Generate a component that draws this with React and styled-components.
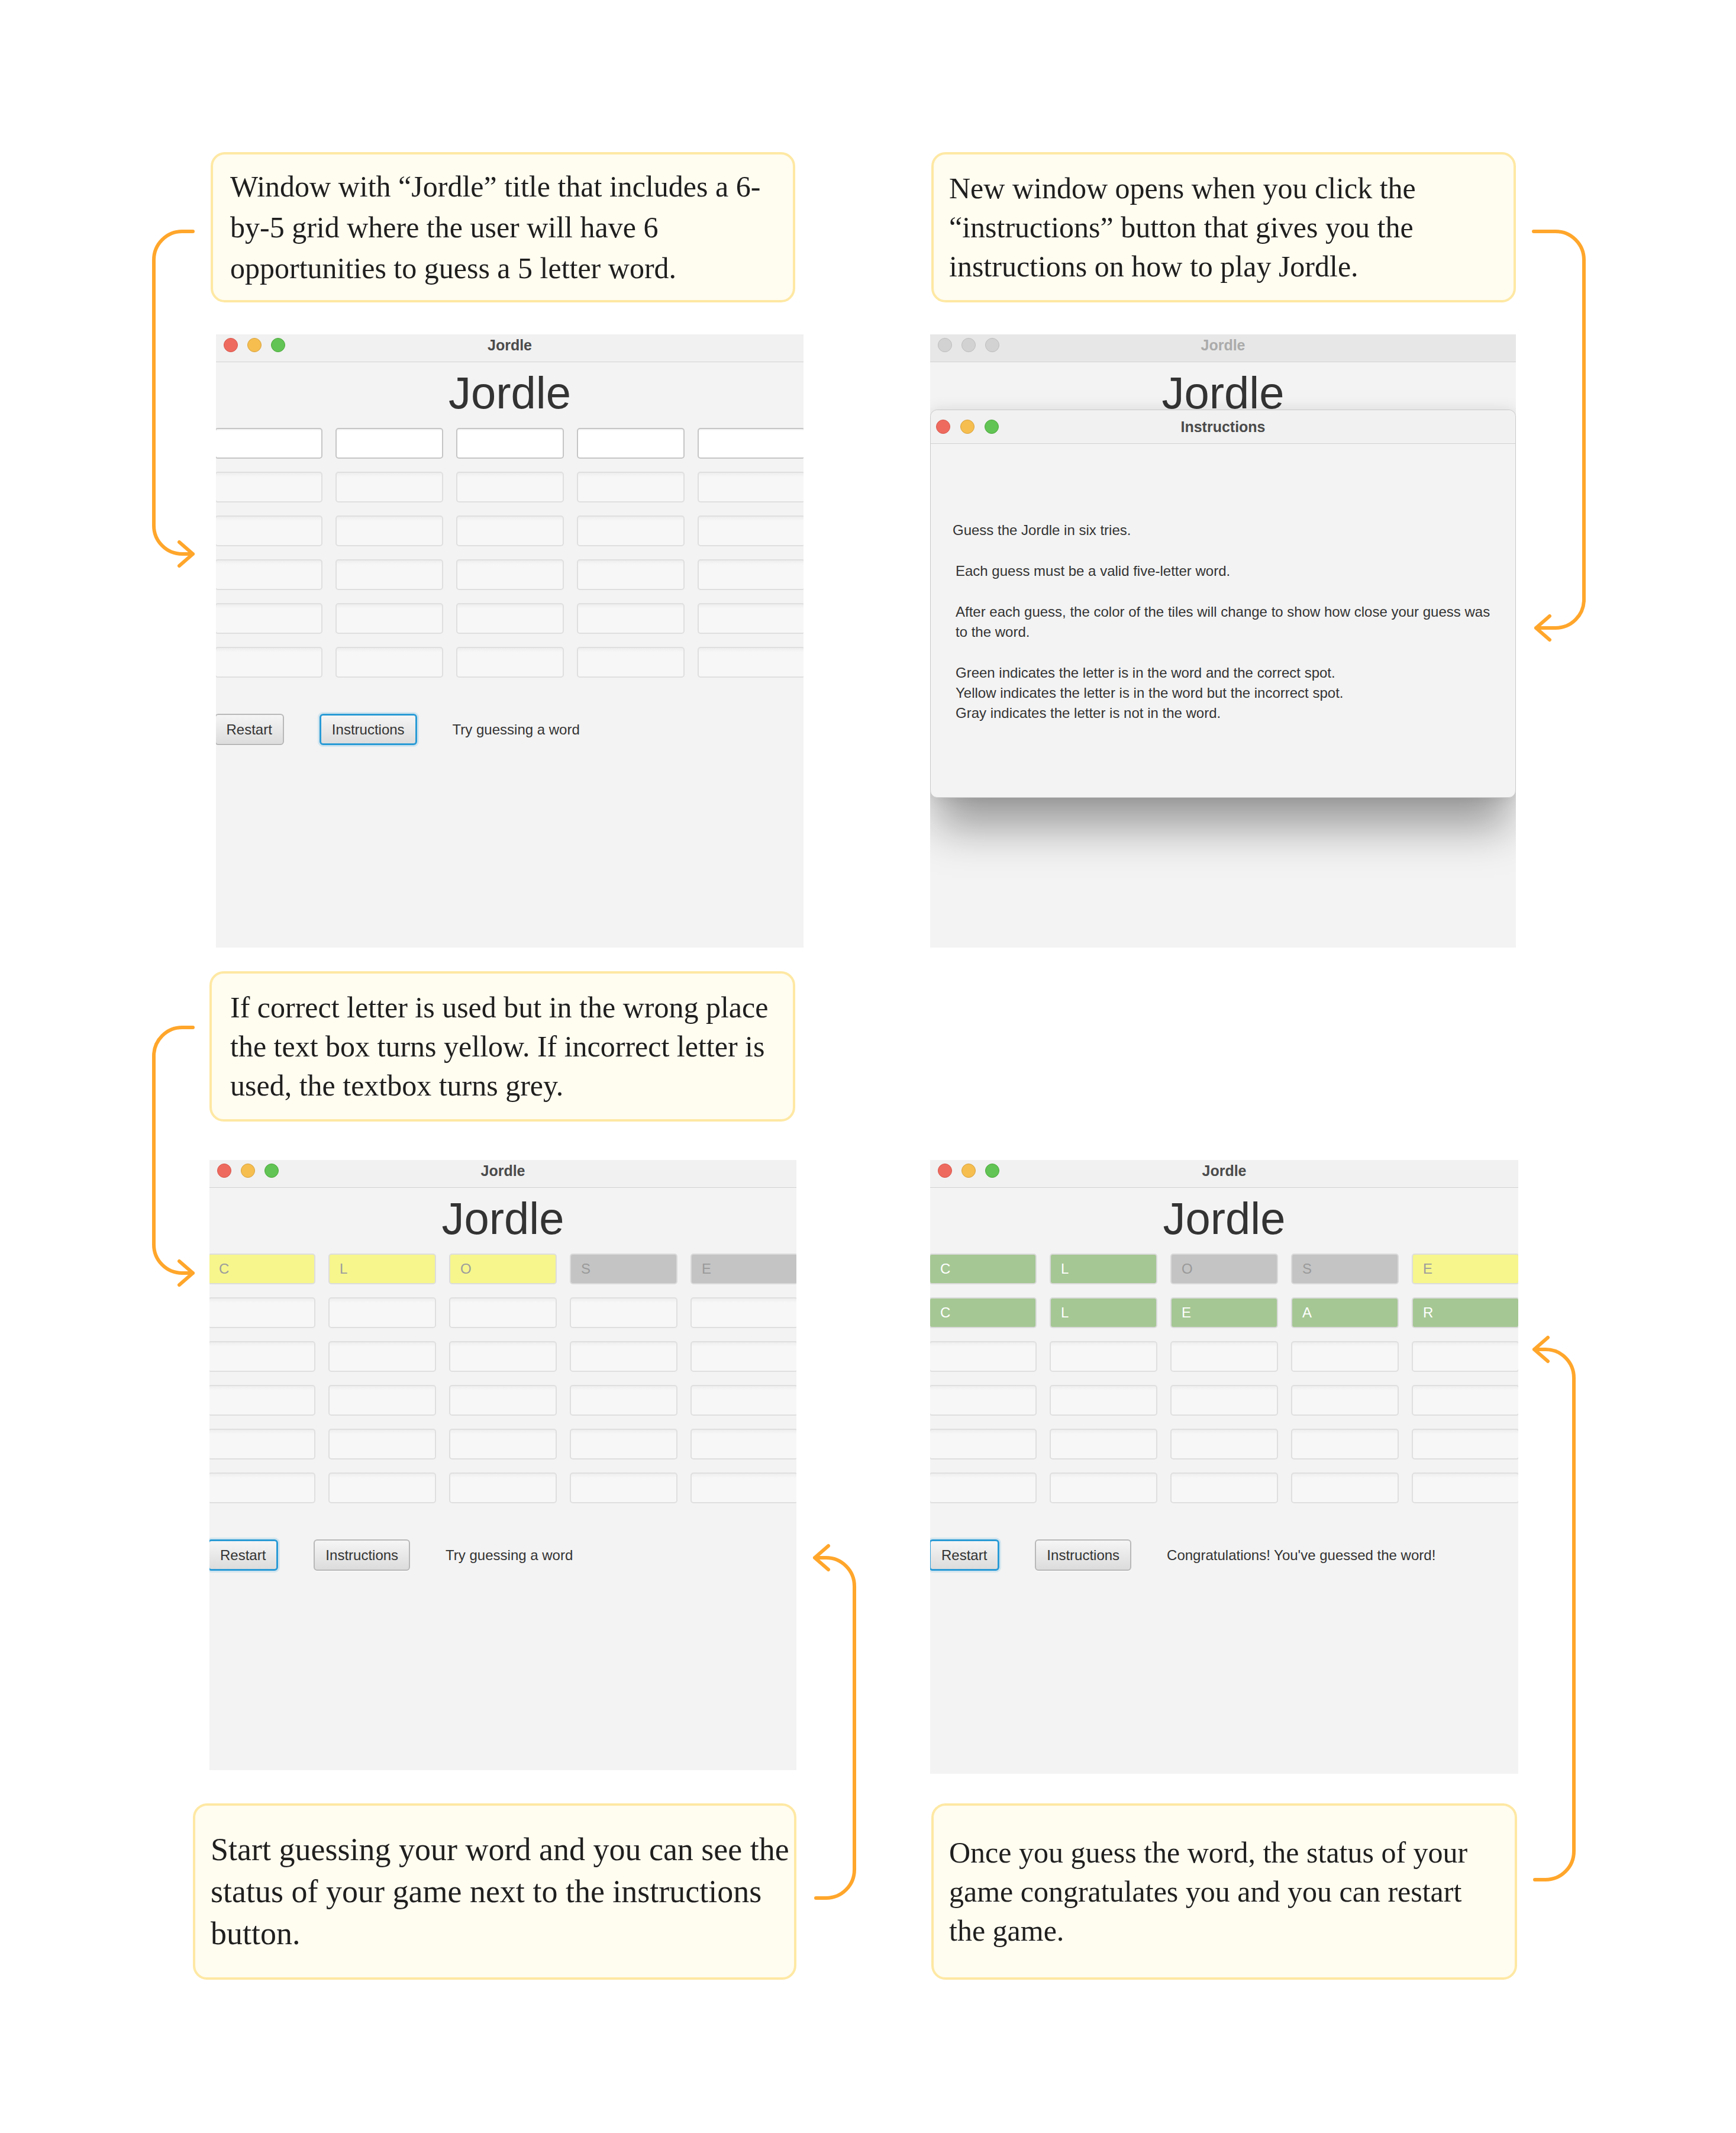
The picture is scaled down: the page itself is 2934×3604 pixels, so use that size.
import React from 'react';
import styled, { createGlobalStyle } from 'styled-components';

const GlobalStyle = createGlobalStyle`
  html, body { margin: 0; padding: 0; background: #ffffff; }
  * { box-sizing: border-box; }
`;

const Page = styled.div`
    width: 2934px;
    height: 3604px;
    padding-top: 257px;
    display: grid;
    grid-template-columns: 326px 1032px 214px 994px 368px;
    grid-template-rows: 254px 1090px 294px 1102px 348px;
    background: #ffffff;
`;

// yellow note box
const Callout = styled.div`
    grid-column: ${p => p.$col};
    grid-row: ${p => p.$row};
    align-self: end;
    margin-left: ${p => p.$ml}px;
    width: ${p => p.$w}px;
    height: ${p => p.$h}px;
    border: 4px solid #fee8a3;
    border-radius: 24px;
    background: #fffcf0;
    display: flex;
    align-items: center;
    padding-left: ${p => p.$pl}px;
    font-family: "Liberation Serif", "Times New Roman", serif;
    font-size: ${p => p.$size || 50}px;
    line-height: ${p => p.$lh}px;
    color: #1f1f1f;
    white-space: nowrap;
`;

const ArrowSvg = styled.svg`
    grid-column: ${p => p.$col};
    grid-row: ${p => p.$row};
    align-self: start;
    justify-self: start;
    margin-left: ${p => p.$ml}px;
    margin-top: ${p => p.$mt}px;
    overflow: visible;
`;

const Window = styled.div`
    grid-column: ${p => p.$col};
    grid-row: ${p => p.$row};
    align-self: ${p => p.$align || 'end'};
    margin-left: ${p => p.$ml || 0}px;
    margin-top: ${p => p.$mt || 0}px;
    width: ${p => p.$w}px;
    height: ${p => p.$h}px;
    position: relative;
    overflow: hidden;
    display: flex;
    flex-direction: column;
    background: #f3f3f3;
    font-family: "Liberation Sans", Arial, sans-serif;
`;

const TitleBar = styled.div`
    height: ${p => p.$height || 47}px;
    flex-shrink: 0;
    display: grid;
    grid-template-columns: 1fr auto 1fr;
    align-items: ${p => p.$center ? 'center' : 'start'};
    padding-top: ${p => p.$center ? 0 : 6}px;
    background: ${p => p.$inactive ? '#e7e7e7' : '#f1f1f1'};
    border-bottom: 1px solid #d2d2d2;
    border-radius: ${p => p.$round ? '12px 12px 0 0' : '0'};
`;

const Lights = styled.div`
    display: flex;
    gap: ${p => p.$gap || 16}px;
    padding-left: ${p => p.$pl || 13}px;
`;

const lightColors = {
    red: ['#ee6a5f', '#d8574b'],
    yellow: ['#f5be4f', '#d9a23f'],
    green: ['#61c454', '#4da83d'],
    off: ['#d2d2d2', '#bdbdbd'],
};

const Light = styled.span`
    width: 24px;
    height: 24px;
    border-radius: 50%;
    background: ${p => lightColors[p.$c][0]};
    border: 1px solid ${p => lightColors[p.$c][1]};
`;

const WindowTitle = styled.div`
    font-size: 25px;
    line-height: 24px;
    font-weight: bold;
    color: ${p => p.$inactive ? '#ababab' : '#4b4b4b'};
`;

const Body = styled.div`
    flex: 1;
    display: flex;
    flex-direction: column;
    align-items: center;
    overflow: hidden;
`;

const Content = styled.div`
    width: 998px;
    flex-shrink: 0;
`;

const Heading = styled.div`
    margin-top: 13px;
    font-size: 76px;
    line-height: 78px;
    text-align: center;
    color: #333333;
`;

const Board = styled.div`
    margin-top: 20px;
    display: grid;
    grid-template-columns: repeat(5, 182px);
    grid-auto-rows: 52px;
    gap: 22px;
`;

const tileStyles = {
    active: { bg: '#ffffff', border: '#c5c5c5', color: '#999999' },
    empty: { bg: 'linear-gradient(#eeeeee, #f7f7f7 7px)', border: '#dfdfdf', color: '#999999' },
    yellow: { bg: '#f6f68d', border: '#dddddd', color: '#9c9c9c' },
    gray: { bg: '#c4c4c4', border: '#dadada', color: '#9a9a9a' },
    green: { bg: '#a5c794', border: '#dadada', color: '#ffffff' },
};

const Tile = styled.div`
    border: 2px solid ${p => tileStyles[p.$kind].border};
    border-radius: 5px;
    background: ${p => tileStyles[p.$kind].bg};
    color: ${p => tileStyles[p.$kind].color};
    display: flex;
    align-items: center;
    padding-left: 17px;
    font-size: 24px;
    box-shadow: ${p => p.$kind === 'active' ? 'inset 0 3px 3px -2px rgba(0,0,0,0.08)' : 'none'};
`;

const Controls = styled.div`
    margin-top: 61px;
    display: flex;
    align-items: center;
    gap: 60px;
`;

const Button = styled.div`
    height: 53px;
    padding: 0 18px;
    display: flex;
    align-items: center;
    font-size: 24px;
    color: #333333;
    border-radius: 6px;
    background: linear-gradient(#f5f5f5, #dcdcdc);
    border: ${p => p.$focused ? '3px solid #2a9bd6' : '2px solid #b8b8b8'};
    box-shadow: ${p => p.$focused ? '0 0 0 3px rgba(42,155,214,0.16)' : '0 1px 0 rgba(255,255,255,0.8)'};
`;

const Status = styled.div`
    font-size: 24px;
    color: #333333;
`;

const Dialog = styled.div`
    position: absolute;
    left: 0;
    right: 0;
    top: 127px;
    height: 656px;
    border-radius: 12px;
    background: #f3f3f3;
    border: 1px solid #c9c9c9;
    box-shadow: 0 62px 70px -12px rgba(0,0,0,0.36), 0 0 26px rgba(0,0,0,0.1);
    display: flex;
    flex-direction: column;
`;

const DialogBody = styled.div`
    padding: 129px 0 0 42px;
    font-size: 24px;
    line-height: 34px;
    color: #333333;
`;

const Para = styled.p`
    margin: 0 0 35px ${p => p.$shift || 0}px;
`;

function bracketPath({ vx, topX, botX, top, bottom, head, r = 48 }) {
    const dt = Math.sign(topX - vx);
    const db = Math.sign(botX - vx);
    const st = dt > 0 ? 0 : 1;
    const sb = dt > 0 ? 0 : 1;
    let d = `M ${topX} ${top} L ${vx + dt * r} ${top} A ${r} ${r} 0 0 ${st} ${vx} ${top + r} L ${vx} ${bottom - r} A ${r} ${r} 0 0 ${sb} ${vx + db * r} ${bottom} L ${botX} ${bottom}`;
    if (head === 'bottom') {
        const ax = botX - db * 23;
        d += ` M ${ax} ${bottom - 20} L ${botX} ${bottom} L ${ax} ${bottom + 20}`;
    } else {
        const ax = topX - dt * 23;
        d += ` M ${ax} ${top - 20} L ${topX} ${top} L ${ax} ${top + 20}`;
    }
    return d;
}

function Arrow({ col, row, ml, mt, w, h, ...geo }) {
    return (
        <ArrowSvg $col={col} $row={row} $ml={ml} $mt={mt} width={w} height={h} viewBox={`0 0 ${w} ${h}`}>
            <path d={bracketPath(geo)} fill="none" stroke="#ffa62b" strokeWidth="6" strokeLinecap="round" strokeLinejoin="round" />
        </ArrowSvg>
    );
}

function TrafficLights({ off, gap, pl }) {
    return (
        <Lights $gap={gap} $pl={pl}>
            <Light $c={off ? 'off' : 'red'} />
            <Light $c={off ? 'off' : 'yellow'} />
            <Light $c={off ? 'off' : 'green'} />
        </Lights>
    );
}

const emptyRow = ['', '', '', '', ''].map(() => ({ k: 'empty', l: '' }));

function makeBoard(guessRows, firstActive) {
    const rows = guessRows.map(r => r.map(([l, k]) => ({ l, k })));
    while (rows.length < 6) {
        rows.push(rows.length === 0 && firstActive ? emptyRow.map(() => ({ k: 'active', l: '' })) : emptyRow);
    }
    return rows;
}

function GameWindow({ col, row, ml, mt, w, h, align, board, focus, status, inactive, children }) {
    return (
        <Window $col={col} $row={row} $ml={ml} $mt={mt} $w={w} $h={h} $align={align}>
            <TitleBar $inactive={inactive}>
                <TrafficLights off={inactive} />
                <WindowTitle $inactive={inactive}>Jordle</WindowTitle>
                <div />
            </TitleBar>
            <Body>
                <Content>
                    <Heading>Jordle</Heading>
                    <Board>
                        {board.flat().map((t, i) => (
                            <Tile key={i} $kind={t.k}>{t.l}</Tile>
                        ))}
                    </Board>
                    <Controls>
                        <Button $focused={focus === 'restart'}>Restart</Button>
                        <Button $focused={focus === 'instructions'}>Instructions</Button>
                        <Status>{status}</Status>
                    </Controls>
                </Content>
            </Body>
            {children}
        </Window>
    );
}

function Instructions() {
    return (
        <Dialog>
            <TitleBar $height={57} $center $round>
                <TrafficLights gap={17} pl={9} />
                <WindowTitle>Instructions</WindowTitle>
                <div />
            </TitleBar>
            <DialogBody>
                <Para $shift={-5}>Guess the Jordle in six tries.</Para>
                <Para>Each guess must be a valid five-letter word.</Para>
                <Para>After each guess, the color of the tiles will change to show how close your guess was<br />to the word.</Para>
                <Para>
                    Green indicates the letter is in the word and the correct spot.<br />
                    Yellow indicates the letter is in the word but the incorrect spot.<br />
                    Gray indicates the letter is not in the word.
                </Para>
            </DialogBody>
        </Dialog>
    );
}

const boardStart = makeBoard([], true);
const boardYellow = makeBoard([
    [['C', 'yellow'], ['L', 'yellow'], ['O', 'yellow'], ['S', 'gray'], ['E', 'gray']],
]);
const boardWin = makeBoard([
    [['C', 'green'], ['L', 'green'], ['O', 'gray'], ['S', 'gray'], ['E', 'yellow']],
    [['C', 'green'], ['L', 'green'], ['E', 'green'], ['A', 'green'], ['R', 'green']],
]);

export default function App() {
    return (
        <>
            <GlobalStyle />
            <Page>
                <Arrow col="1" row="1 / 3" ml={240} mt={103} w={110} h={600} vx={20} topX={86} botX={86} top={31} bottom={576} head="bottom" />
                <Arrow col="5" row="1 / 3" ml={4} mt={103} w={130} h={740} vx={107} topX={22} botX={26} top={31} bottom={701} head="bottom" />
                <Arrow col="1" row="3 / 5" ml={240} mt={104} w={110} h={480} vx={20} topX={86} botX={86} top={31} bottom={446} head="bottom" />
                <Arrow col="3" row="4 / 6" ml={0} mt={705} w={110} h={640} vx={86} topX={19} botX={21} top={32} bottom={607} head="top" />
                <Arrow col="5" row="4 / 6" ml={4} mt={355} w={110} h={960} vx={90} topX={23} botX={24} top={30} bottom={926} head="top" />

                <Callout $col="2" $row="1" $ml={30} $w={988} $h={254} $pl={29} $lh={69}>
                    <div>Window with “Jordle” title that includes a 6-<br />by-5 grid where the user will have 6<br />opportunities to guess a 5 letter word.</div>
                </Callout>
                <Callout $col="4" $row="1" $ml={2} $w={988} $h={254} $pl={26} $lh={66}>
                    <div>New window opens when you click the<br />“instructions” button that gives you the<br />instructions on how to play Jordle.</div>
                </Callout>

                <GameWindow col="2" row="2" ml={39} w={993} h={1036} board={boardStart} focus="instructions" status="Try guessing a word" />
                <GameWindow col="4" row="2" w={990} h={1036} board={boardStart} focus="instructions" status="Try guessing a word" inactive>
                    <Instructions />
                </GameWindow>

                <Callout $col="2" $row="3" $ml={28} $w={990} $h={254} $pl={31} $lh={66}>
                    <div>If correct letter is used but in the wrong place<br />the text box turns yellow. If incorrect letter is<br />used, the textbox turns grey.</div>
                </Callout>

                <GameWindow col="2" row="4" ml={28} mt={65} align="start" w={992} h={1031} board={boardYellow} focus="restart" status="Try guessing a word" />
                <GameWindow col="4" row="4" mt={65} align="start" w={994} h={1037} board={boardWin} focus="restart" status="Congratulations! You've guessed the word!" />

                <Callout $col="2" $row="5" $ml={0} $w={1020} $h={298} $pl={26} $lh={71} $size={54}>
                    <div>Start guessing your word and you can see the<br />status of your game next to the instructions<br />button.</div>
                </Callout>
                <Callout $col="4" $row="5" $ml={2} $w={990} $h={298} $pl={26} $lh={66}>
                    <div>Once you guess the word, the status of your<br />game congratulates you and you can restart<br />the game.</div>
                </Callout>
            </Page>
        </>
    );
}
